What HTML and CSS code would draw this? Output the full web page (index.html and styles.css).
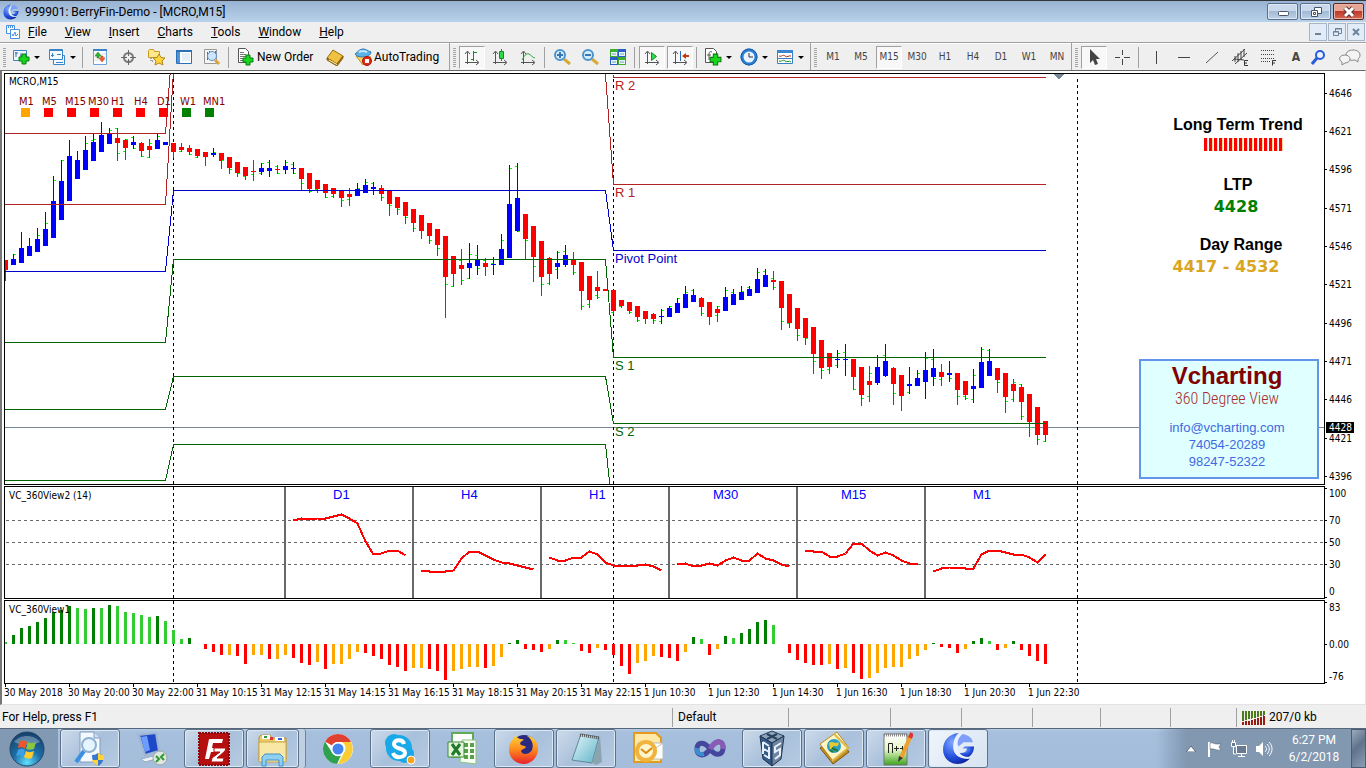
FILE: index.html
```html
<!DOCTYPE html>
<html lang="en">
<head>
<meta charset="utf-8">
<title>999901: BerryFin-Demo - [MCRO,M15]</title>
<link rel="stylesheet" href="styles.css">
</head>
<body>
<svg class="defs" aria-hidden="true">
  <defs>
    <radialGradient id="gBlue" cx=".35" cy=".3" r=".8"><stop offset="0" stop-color="#7fa8ff"/><stop offset=".6" stop-color="#2450dc"/><stop offset="1" stop-color="#0a1f9a"/></radialGradient>
    <radialGradient id="gOrb" cx=".5" cy=".9" r=".9"><stop offset="0" stop-color="#5fe0ff"/><stop offset=".45" stop-color="#1c6fa8"/><stop offset="1" stop-color="#173e66"/></radialGradient>
    <linearGradient id="gFox" x1="0" y1="0" x2="0" y2="1"><stop offset="0" stop-color="#ffd43a"/><stop offset=".5" stop-color="#ff8a1c"/><stop offset="1" stop-color="#e8202c"/></linearGradient>
    <linearGradient id="gPad" x1="0" y1="0" x2="1" y2="1"><stop offset="0" stop-color="#e6f8fc"/><stop offset="1" stop-color="#5fb2c8"/></linearGradient>
    <linearGradient id="gLime" x1="0" y1="0" x2="0" y2="1"><stop offset="0" stop-color="#fff"/><stop offset=".5" stop-color="#e5f6c8"/><stop offset="1" stop-color="#3fa51d"/></linearGradient>
    <symbol id="swirl" viewBox="0 0 32 32"><path d="M16 1C7 2 1 8 1 17c0 8 6 14 14 14 5 0 9-2 12-5-9 1-16-4-16-12 0-6 2-10 5-13z" fill="url(#gBlue)"/><path d="M19 2c-6 3-8 8-8 13 0 8 8 12 15 9-8-1-12-6-11-12 0-4 2-8 4-10z" fill="#e8f0ff"/><path d="M20 2c-4 3-6 8-4 12l5-4h9C29 6 26 3 20 2z" fill="#7f9ffa"/><path d="M22 14h9c0 5-2 8-5 10-4 0-7-1-9-4 4 1 7-1 7-4h-4z" fill="url(#gBlue)"/></symbol>
    <symbol id="plus" viewBox="0 0 12 12"><path d="M4 1h4v3h3v4H8v3H4V8H1V4h3z" fill="#17d61b" stroke="#0a7d12"/></symbol>
    <symbol id="axes" viewBox="0 0 18 18"><path d="M4.500 16V4M2 6l2.500-3L7 6M2 14.500h13M13 12l3 2.500-3 2.500" fill="none" stroke="#555"/></symbol>
  </defs>
</svg>

<header class="titlebar">
  <svg class="app-icon" width="16" height="16"><use href="#swirl"/></svg>
  <h1 class="title">999901: BerryFin-Demo - [MCRO,M15]</h1>
  <div class="caption">
    <button class="cap" aria-label="Minimize"><svg width="14" height="12"><rect x="2.500" y="5.500" width="10" height="4" rx="1" fill="#fff" stroke="#475566"/></svg></button>
    <button class="cap" aria-label="Restore"><svg width="14" height="12" fill="#fff" stroke="#475566"><path d="M5.500 1.500h7v6h-7z"/><path d="M2.500 4.500h6v6h-6z"/><path d="M4.500 6.500h2v2h-2z"/></svg></button>
    <button class="cap cap-close" aria-label="Close"><svg width="14" height="12"><path d="M3 2l8 8M11 2l-8 8" stroke="#5a3a3a" stroke-width="5"/><path d="M3 2l8 8M11 2l-8 8" stroke="#fff" stroke-width="3"/></svg></button>
  </div>
</header>

<nav class="menubar" aria-label="Main menu">
  <svg class="doc-icon" width="16" height="16" fill="#fff" stroke="#4a90e0"><path d="M1.500 1.500h8v8h-8z"/><path d="M1 3h9" stroke-width="2" stroke-dasharray="1 1"/><path d="M5.500 5.500h9v9h-9z"/><path d="M7 10l1 2 2-4 1 4 2-2" fill="none"/></svg>
  <button class="menu"><u>F</u>ile</button>
  <button class="menu"><u>V</u>iew</button>
  <button class="menu"><u>I</u>nsert</button>
  <button class="menu"><u>C</u>harts</button>
  <button class="menu"><u>T</u>ools</button>
  <button class="menu"><u>W</u>indow</button>
  <button class="menu"><u>H</u>elp</button>
  <div class="doc-caption">
    <button class="doc-btn" aria-label="Minimize chart"><svg width="10" height="10"><path d="M2 7h6" stroke="#6f8296" stroke-width="2"/></svg></button>
    <button class="doc-btn" aria-label="Restore chart"><svg width="10" height="10" fill="none" stroke="#6f8296"><path d="M3.500 4V1.500h6v5H7"/><path d="M3 2h7M1 5h6"/><path d="M1.500 4.500h5v4h-5z"/></svg></button>
    <button class="doc-btn" aria-label="Close chart"><svg width="10" height="10"><path d="M2 2l6 6M8 2L2 8" stroke="#6f8296" stroke-width="2"/></svg></button>
  </div>
</nav>

<div class="toolbars">
  <div class="group" role="toolbar" aria-label="Standard">
    <i class="grip"></i>
    <button class="tb drop" aria-label="New chart"><svg width="18" height="18"><path d="M1.500 2.500h13v10h-13z" fill="#eef7ff" stroke="#3a85c8"/><path d="M3 5h3M4 4v5M8 8h5M9 5v3" stroke="#3a6a9a"/><use href="#plus" x="6" y="5" width="12" height="12"/></svg></button>
    <button class="tb drop" aria-label="Profiles"><svg width="18" height="18" fill="#f4faff" stroke="#3a85c8"><path d="M5.500 7.500h11v9h-11z"/><path d="M1.500 1.500h13v10h-13z"/><path d="M1 2.500h14"/><path d="M4.500 5v4M3 7.500h3M9 6.500h4M8 14.500h7"/></svg></button>
    <i class="sep"></i>
    <button class="tb" aria-label="Market Watch"><svg width="18" height="18"><path d="M2.500 1.500h13v15h-13z" fill="#fff" stroke="#6aa5dc"/><path d="M2 2h14" stroke="#3a85c8" stroke-width="2"/><path d="M3 6h12M3 9h12M3 12h12" stroke="#ddd"/><path d="M7 4l3 4H8v2H6V8H4z" fill="#2db52d" stroke="#17771a" stroke-width=".5"/><path d="M11 14l3-4h-2V8h-2v2H8z" fill="#f2602c" stroke="#a83c17" stroke-width=".5"/></svg></button>
    <button class="tb" aria-label="Data Window"><svg width="18" height="18"><circle cx="9.500" cy="9.500" r="4.500" fill="none" stroke="#777" stroke-width="2"/><path d="M9.500 2v6M9.500 11v6M2 9.500h6M11 9.500h6" stroke="#666"/></svg></button>
    <button class="tb" aria-label="Navigator"><svg width="18" height="18"><path d="M1.500 2.500l1-1h4l1 2h5v6h-11z" fill="#ffe88a" stroke="#c79b22"/><path d="M4 10v3h3" fill="none" stroke="#555" stroke-dasharray="1 1"/><path d="M12 6l2 3.500 4 .5-3 3 1 4-4-2-4 2 1-4-3-3 4-.5z" fill="#ffd63c" stroke="#b3851a"/></svg></button>
    <button class="tb" aria-label="Terminal"><svg width="18" height="18"><path d="M1.500 2.500h15v13h-15z" fill="#fff" stroke="#2a6fb8"/><path d="M1 3h16" stroke="#2a6fb8" stroke-width="2"/><path d="M2 4h3v11H2z" fill="#4d93d8"/><path d="M7 6h8M7 8h8M7 10h8M7 12h8" stroke="#c9def2"/></svg></button>
    <button class="tb" aria-label="Strategy Tester"><svg width="18" height="18"><path d="M1.500 1.500h12v14h-12z" fill="#f5f5f5" stroke="#999"/><path d="M4.500 4v8M6.500 3v3M12.500 3v4" stroke="#666"/><circle cx="9" cy="8" r="4.500" fill="#cfe6fa" stroke="#5a92c8"/><path d="M12 12l4 4" stroke="#d9a53a" stroke-width="3"/></svg></button>
    <i class="sep"></i>
    <button class="tb text order"><svg width="18" height="18"><path d="M1.500.5h7l3 3v11h-10z" fill="#fff" stroke="#555"/><path d="M3 4.500h4M3 6.500h6M3 8.500h6M3 10.500h4M3 12.500h3" stroke="#777"/><use href="#plus" x="5" y="6" width="12" height="12"/></svg>New Order</button>
    <button class="tb" aria-label="MetaEditor"><svg width="18" height="18"><path d="M1 10l6-8 10 6-6 8z" fill="#f0c040" stroke="#9a6f12"/><path d="M1 10v2l10 6 6-8V8l-6 8z" fill="#b07c16" stroke="#8a5f0c"/><path d="M3 12l8 4.500" stroke="#fff6cc"/></svg></button>
    <button class="tb text auto"><svg width="18" height="18"><path d="M2 8l7 9 8-8z" fill="#f8d25a" stroke="#c0912a"/><path d="M1 6c3-2 4-5 8-5s4 2 8 3c0 3-4 5-8 5S2 8 1 6z" fill="#5db2e6" stroke="#2d7db5"/><path d="M5 4c2-1 6-1 8 0" stroke="#c9ecff" fill="none" stroke-width="2"/><circle cx="13" cy="13" r="4.500" fill="#e02a18" stroke="#a81208"/><path d="M11 11h4v4h-4z" fill="#fff"/></svg>AutoTrading</button>
  </div>
  <div class="group charts" role="toolbar" aria-label="Charts">
    <i class="grip"></i>
    <button class="tb on" aria-label="Bar chart"><svg width="18" height="18"><use href="#axes" width="18" height="18"/><path d="M10.500 3v10M11 4.500h3M8 11.500h3" stroke="#138a22" fill="none"/></svg></button>
    <button class="tb" aria-label="Candlesticks"><svg width="18" height="18"><use href="#axes" width="18" height="18"/><path d="M10.500 1v12" stroke="#138a22"/><path d="M8.500 3.500h4v7h-4z" fill="#31d94a" stroke="#138a22"/></svg></button>
    <button class="tb" aria-label="Line chart"><svg width="18" height="18"><use href="#axes" width="18" height="18"/><path d="M3 12c2-4 4-7 7-6 2 1 4 4 6 4" stroke="#2ea53a" fill="none"/></svg></button>
    <i class="sep"></i>
    <button class="tb" aria-label="Zoom in"><svg width="18" height="18"><path d="M11 11l6 5" stroke="#d9a93a" stroke-width="3"/><circle cx="7" cy="7" r="5" fill="#d8eefc" stroke="#4a94d0" stroke-width="2"/><path d="M4 7h6M7 4v6" stroke="#3b76b4" stroke-width="2"/></svg></button>
    <button class="tb" aria-label="Zoom out"><svg width="18" height="18"><path d="M11 11l6 5" stroke="#d9a93a" stroke-width="3"/><circle cx="7" cy="7" r="5" fill="#d8eefc" stroke="#4a94d0" stroke-width="2"/><path d="M4 7h6" stroke="#3b76b4" stroke-width="2"/></svg></button>
    <button class="tb" aria-label="Tile windows"><svg width="18" height="18"><path d="M1 1h8v8H1zM9 9h8v8H9z" fill="#3fae2a"/><path d="M9 1h8v8H9zM1 9h8v8H1z" fill="#2c5fc8"/><path d="M2 4h6v4H2zM10 4h6v4h-6zM2 12h6v4H2zM10 12h6v4h-6z" fill="#e9f4ff"/><path d="M3 6h4M11 6h4M3 14h4M11 14h4" stroke="#6a9"/></svg></button>
    <i class="sep"></i>
    <button class="tb on" aria-label="Auto scroll"><svg width="18" height="18"><use href="#axes" width="18" height="18"/><path d="M8.500 4.500l5 4-5 4z" fill="#31d94a" stroke="#138a22"/></svg></button>
    <button class="tb on" aria-label="Chart shift"><svg width="18" height="18"><use href="#axes" width="18" height="18"/><path d="M9.500 3v10" stroke="#2d6bb0"/><path d="M11 8l4-3v2h3v2h-3v2z" fill="#c33a12"/></svg></button>
    <i class="sep"></i>
    <button class="tb drop" aria-label="Indicators"><svg width="18" height="18"><path d="M1.500.5h8l3 3v11h-11z" fill="#fff" stroke="#555"/><path d="M8 4c-2-1-3 0-3 2v6M3 7h4" stroke="#555" fill="none"/><use href="#plus" x="5" y="5" width="13" height="13"/></svg></button>
    <button class="tb drop" aria-label="Periods"><svg width="18" height="18"><circle cx="9" cy="9" r="7" fill="#e8f4ff" stroke="#2a7fd0" stroke-width="3"/><circle cx="9" cy="9" r="8" fill="none" stroke="#1a5fa8"/><path d="M9 5v4h4" stroke="#333" fill="none"/></svg></button>
    <button class="tb drop" aria-label="Templates"><svg width="18" height="18"><path d="M1.500 2.500h15v13h-15z" fill="#fff" stroke="#3a7fc0"/><path d="M1 3.500h16" stroke="#3a85d0" stroke-width="3"/><path d="M3 8c3 1 4-2 6 0s4-1 6 0" stroke="#a8321a" fill="none"/><path d="M2 10.500h14" stroke="#3a7fc0"/><path d="M3 13c3 1 4-2 6 0s4-1 6 1" stroke="#1f8a2a" fill="none"/></svg></button>
  </div>
  <div class="group" role="toolbar" aria-label="Timeframes">
    <i class="grip"></i>
    <button class="tb tf">M1</button><button class="tb tf">M5</button><button class="tb tf on">M15</button><button class="tb tf">M30</button><button class="tb tf">H1</button><button class="tb tf">H4</button><button class="tb tf">D1</button><button class="tb tf">W1</button><button class="tb tf">MN</button>
  </div>
  <div class="group last" role="toolbar" aria-label="Line studies">
    <i class="grip"></i>
    <button class="tb on" aria-label="Cursor"><svg width="18" height="18"><path d="M5 1v14l3-3 2 5 3-1-2-5h4z" fill="#444"/></svg></button>
    <button class="tb" aria-label="Crosshair"><svg width="18" height="18"><path d="M9.500 2v5M9.500 11v6M2 9.500h5M11 9.500h6" stroke="#444"/></svg></button>
    <i class="sep"></i>
    <button class="tb" aria-label="Vertical line"><svg width="18" height="18"><path d="M9.500 3v13" stroke="#444"/></svg></button>
    <button class="tb" aria-label="Horizontal line"><svg width="18" height="18"><path d="M3 9.500h12" stroke="#444"/></svg></button>
    <button class="tb" aria-label="Trendline"><svg width="18" height="18"><path d="M3 15L15 4" stroke="#555"/></svg></button>
    <button class="tb" aria-label="Equidistant channel"><svg width="18" height="18"><path d="M1 13L14 1M4 16L16 5M4 8v6M7 5v9M10 3v9M13 1v8M3 11l10 1" stroke="#444" fill="none"/><path d="M17 12.500h-3.500v5H17M13 15h3" stroke="#333" fill="none"/></svg></button>
    <button class="tb" aria-label="Fibonacci"><svg width="18" height="18"><path d="M2 2.500h13M2 6.500h13M2 10.500h13M2 13.500h9" stroke="#444" stroke-dasharray="1 1"/><path d="M17 12.500h-3.500v5M13 15h3" stroke="#333" fill="none"/></svg></button>
    <button class="tb letter" aria-label="Text">A</button>
    <button class="tb narrow" aria-label="Search"><svg width="16" height="16"><path d="M6 9l-5 6" stroke="#2a5bd8" stroke-width="3"/><circle cx="9" cy="6" r="4" fill="#eaf3ff" stroke="#2a5bd8" stroke-width="2"/></svg></button>
    <button class="tb chat" aria-label="Chat"><svg width="22" height="18" fill="#f4f4f4" stroke="#888"><path d="M14 2c4 0 7 2 7 5 0 2-1 3-2 4v3l-3-2c-6 1-9-1-9-5 0-3 3-5 7-5z"/><path d="M6 7c3 0 5 2 5 4s-2 4-5 4l-3 2v-3c-4-2-3-7 3-7z"/></svg></button>
  </div>
</div>

<main class="workspace">
  <section class="row row-main" aria-label="Price chart">
    <div class="pane">
      <svg id="price" class="plot"></svg>
      <ul class="tf-signals">
        <li class="warn">M1</li><li class="down">M5</li><li class="down">M15</li><li class="down">M30</li><li class="down">H1</li><li class="down">H4</li><li class="down">D1</li><li class="up">W1</li><li class="up">MN1</li>
      </ul>
      <dl class="stats">
        <dt>Long Term Trend</dt><dd class="trend"><i class="trend-bars"></i></dd>
        <dt>LTP</dt><dd class="ltp">4428</dd>
        <dt class="range-title">Day Range</dt><dd class="range">4417 - 4532</dd>
      </dl>
      <aside class="card">
        <h2>Vcharting</h2>
        <p class="tag">360 Degree View</p>
        <p><a href="mailto:info@vcharting.com">info@vcharting.com</a></p>
        <p>74054-20289</p>
        <p>98247-52322</p>
      </aside>
    </div>
    <svg id="priceAxis" class="axis"></svg>
  </section>
  <section class="row row-rsi" aria-label="VC_360View2">
    <div class="pane"><svg id="rsi" class="plot"></svg></div>
    <svg id="rsiAxis" class="axis"></svg>
  </section>
  <section class="row row-hist" aria-label="VC_360View1">
    <div class="pane"><svg id="hist" class="plot"></svg></div>
    <svg id="histAxis" class="axis"></svg>
  </section>
  <svg id="timeAxis" class="time-axis"></svg>
</main>

<footer class="statusbar">
  <span class="cell help">For Help, press F1</span>
  <span class="cell profile">Default</span>
  <span class="cell w102"></span><span class="cell w71"></span><span class="cell w71"></span><span class="cell w68"></span><span class="cell w70"></span><span class="cell w66"></span>
  <span class="cell traffic"><svg width="24" height="14" class="crisp"><path d="M0 4h24" stroke="#4c7a1a" stroke-width="8" stroke-dasharray="2 1"/><path d="M0 10.500h24" stroke="#4c7a1a" stroke-width="5" stroke-dasharray="2 1"/><path d="M0 14v-4L24 4v10z" fill="#efefef"/><path d="M1 14v-3M4 14v-4M7 14v-4M10 14V9M13 14V8M16 14V7M19 14V6M22 14V5" stroke="#9a1c10" stroke-width="2"/></svg>207/0 kb</span>
</footer>

<nav class="taskbar" aria-label="Taskbar">
  <button class="task start" aria-label="Start"><svg width="36" height="36"><circle cx="18" cy="18" r="17" fill="url(#gOrb)" stroke="#20476b"/><path d="M5 11c6-8 20-8 26 0-8 4-18 4-26 0z" fill="#fff" opacity=".3"/><path d="M10 11c3-2 5-2 8 0l-2 7c-2-2-5-2-7-1z" fill="#f0562a"/><path d="M19 11c3 2 5 1 8 0l-2 7c-3 1-5 1-8 0z" fill="#8cc63e"/><path d="M9 19c3-2 5-1 7 0l-2 7c-2-2-4-2-7-1z" fill="#3d9fe8"/><path d="M17 20c3 2 5 1 8 0l-2 7c-3 1-5 1-8-1z" fill="#fccb2e"/></svg></button>
  <button class="task open" aria-label="Event viewer"><svg width="32" height="36"><path d="M6 1h14l6 6v24H6z" fill="#f3f9ff" stroke="#7f9cc0"/><path d="M20 1v6h6" fill="#cfe0f5" stroke="#7f9cc0"/><path d="M10 20L2 31" stroke="#3b8ee0" stroke-width="4"/><circle cx="15" cy="14" r="7" fill="#e5f4ff" stroke="#8fb0d0" stroke-width="2"/><path d="M18 24c3 0 4-1 6-2 2 1 3 2 6 2 0 6-2 9-6 11-4-2-6-5-6-11z" fill="#3a78d0"/><path d="M24 22c2 1 3 2 6 2v5h-6zM18 29h6v6c-3-2-5-3-6-6z" fill="#ffd23a"/></svg></button>
  <button class="task" aria-label="Remote Desktop"><svg width="32" height="36"><path d="M3 4l17-2 3 18-14 4z" fill="#1f48c8" stroke="#9db4d4" stroke-width="2"/><path d="M5 6l6-1 3 14-5 2z" fill="#6d9cff"/><path d="M5 28l16-4 3 3-15 4z" fill="#eef2f6" stroke="#9aa8bc"/><circle cx="24" cy="27" r="7" fill="#dfe6e0" stroke="#9aa5a5"/><path d="M20 25l3 3-3 3M28 23l-3 3 3 3" stroke="#2d9a32" fill="none" stroke-width="2"/></svg></button>
  <button class="task open" aria-label="FileZilla"><svg width="34" height="36"><path d="M2 2h30v32H2z" fill="#b50f0f" stroke="#8c0808" stroke-width="2" stroke-dasharray="2 1"/><path d="M8 28l4-20h14l-1 4h-9l-1 5h6l-1 4h-6l-2 7z" fill="#fff"/><path d="M17 17h12l-1 3-8 7h7l-1 4H14l1-4 8-6h-6z" fill="#fff" stroke="#b50f0f"/></svg></button>
  <span class="stack"><button class="task open" aria-label="Explorer"><svg width="34" height="36"><path d="M3 6l2-2h9l2 3h14v22H3z" fill="#ecc965" stroke="#b99437"/><path d="M6 4h8v4H6zM19 6h9v4h-9z" fill="#fff"/><path d="M8 5h3v2H8z" fill="#2b9b3c"/><path d="M14 6h3v3h-3z" fill="#d33"/><path d="M22 7h4v2h-4z" fill="#36c"/><path d="M3 11h27v20H3z" fill="#f9e8a5" stroke="#c9a84a"/><path d="M6 35v-9l3-3h15l3 3v9h-4v-6H10v6z" fill="#8fd0f2" stroke="#3d93c8"/></svg></button></span>
  <button class="task" aria-label="Chrome"><svg width="32" height="36"><g transform="translate(16 18)"><circle r="15" fill="#fff"/><path d="M0-15A15 15 0 0 1 13-7H0A7 7 0 0 0-6-3.500L-13-7.500A15 15 0 0 1 0-15z" fill="#e0402f"/><path d="M13-7A15 15 0 0 1 0 15l6-11.500A7 7 0 0 0 4-7z" fill="#fbcd35"/><path d="M-13-7.500L-6 3.500A7 7 0 0 0 3 6.500L-1 15A15 15 0 0 1-13-7.500z" fill="#2fa14f"/><circle r="7" fill="#fff"/><circle r="5.500" fill="#4284f0"/></g></svg></button>
  <button class="task open" aria-label="Skype"><svg width="34" height="36"><circle cx="11" cy="12" r="9" fill="#19a8e8"/><circle cx="22" cy="23" r="9" fill="#19a8e8"/><circle cx="16" cy="17" r="13" fill="#19a8e8"/><path d="M21 13c-1-5-10-5-10 0 0 6 11 3 11 9 0 5-10 6-12 0" fill="none" stroke="#fff" stroke-width="4"/><circle cx="28" cy="29" r="4" fill="#f9a31c" stroke="#fff"/></svg></button>
  <button class="task" aria-label="Excel"><svg width="34" height="36"><path d="M7 2h21v24H7z" fill="#fff" stroke="#5faa55" stroke-width="2"/><path d="M17 9h14v24l-16-2z" fill="#f5fff0" stroke="#8fbf80"/><path d="M19 12h4v4h-4zM25 12h4v4h-4zM19 18h4v4h-4zM25 18h4v4h-4zM19 24h4v4h-4zM25 24h4v4h-4z" fill="#5aa04c"/><path d="M3 11h16v15H3z" fill="#e4f5dc" stroke="#3f8a3a"/><path d="M7 13l8 11M15 13L7 24" stroke="#217a2a" stroke-width="3"/></svg></button>
  <button class="task open" aria-label="Firefox"><svg width="34" height="36"><circle cx="17" cy="17" r="13" fill="#292a80"/><path d="M6 8l3-4c0 2 2 3 4 4 2 0 3 0 4 1-3 1-5 3-3 5 2 1 5 1 5 2-1 2-4 2-5 4 1 4 8 4 11-1 2-5 0-11-5-14 6 0 10 5 11 11 1 9-6 17-14 17S2 27 2 19c0-4 1-8 4-11z" fill="url(#gFox)"/></svg></button>
  <button class="task open" aria-label="Notepad"><svg width="34" height="36"><path d="M12 3l18 3-7 26-20-3z" fill="url(#gPad)" stroke="#5d8a99"/><path d="M23 32l8-26 2 25-6 3z" fill="#8aa4b0"/><path d="M11 4l19 3" stroke="#555" stroke-width="3" stroke-dasharray="1 1"/></svg></button>
  <button class="task" aria-label="Outlook"><svg width="34" height="36"><path d="M3 2h22l5 5v24H3z" fill="#ffe9a8" stroke="#e49a1c" stroke-width="2"/><path d="M7 12h25v16H7z" fill="#fff" stroke="#bbb"/><path d="M7 12l12 9 13-9" fill="none" stroke="#bbb"/><circle cx="15" cy="20" r="9" fill="#fff4cc" stroke="#f0b43c" stroke-width="4"/><path d="M10 18l5 4 6-5" stroke="#d98a10" stroke-width="2" fill="none"/></svg></button>
  <button class="task" aria-label="Visual Studio"><svg width="32" height="36"><path d="M16 18c-5-7-12-8-13-1-1 8 7 10 13 1 7-11 14-8 13 0-1 7-8 7-13 0z" fill="none" stroke="#45479d" stroke-width="5"/><path d="M16 18c7-11 14-8 13 0" fill="none" stroke="#8a5bb5" stroke-width="5"/><path d="M3 17c-1 5 3 7 7 6" fill="none" stroke="#3a8fd0" stroke-width="4"/></svg></button>
  <button class="task open" aria-label="VirtualBox"><svg width="34" height="38"><path d="M17 1l12 5-12 7L5 6z" fill="#8fa3b8" stroke="#28415e"/><path d="M5 6l12 7v23L8 29z" fill="#355a86" stroke="#1c3452"/><path d="M29 6l-12 7v23l9-7z" fill="#6d83a0" stroke="#1c3452"/><path d="M12 4l10 5M22 4L12 9" stroke="#28415e" stroke-width="2"/><path d="M8 12l6 4M9 19l5 3M9 25l5 3M8 12v12M14 17v12M26 13l-6 4v5l5-3v6l-5 4" stroke="#e5f0fb" fill="none" stroke-width="2"/></svg></button>
  <button class="task open" aria-label="Map library"><svg width="34" height="36"><path d="M3 17L20 4l12 17-16 12z" fill="#c18e24" stroke="#7d570e"/><path d="M3 13L20 1l12 16-16 13z" fill="#fff6c4" stroke="#b58a2d"/><path d="M17 3l14 14-16 13" fill="none" stroke="#e0b94a" stroke-width="2"/><circle cx="17" cy="15" r="7" fill="#2b9fc4"/><path d="M12 12c4-3 6 2 9-1 2 3-1 5-3 4s-3 4-5 3z" fill="#e8ca2e"/><path d="M15 17l6 3M13 19l3 2" stroke="#267a30" stroke-width="2"/></svg></button>
  <button class="task open" aria-label="Notepad++"><svg width="34" height="36"><path d="M5 3h23v31H5z" fill="url(#gLime)" stroke="#777"/><path d="M5 4h23" stroke="#888" stroke-width="3" stroke-dasharray="1 1"/><path d="M9.500 22V12.500h4V22M15 17.500h5M17.500 15v5M21 17.500h4M23.500 15v5" fill="none" stroke="#222"/><path d="M32 4L22 27" stroke="#f0a02c" stroke-width="4"/><path d="M20 25l-1 6 5-4z" fill="#333"/><path d="M33 2l-2 5" stroke="#d33" stroke-width="4"/></svg></button>
  <button class="task open active" aria-label="BerryFin"><svg width="33" height="36"><use href="#swirl" width="33" height="35"/></svg></button>
  <div class="tray">
    <svg width="10" height="6" class="up-arrow"><path d="M5 0l5 6H0z" fill="#fff" stroke="#5b6b80"/></svg>
    <svg width="17" height="18"><path d="M3 2v15" stroke="#fff" stroke-width="2"/><path d="M4 3c3-1 4 1 6 1h5l-2 3 2 3c-5 1-7-2-11-1z" fill="#fff" stroke="#4b596c" stroke-width=".5"/></svg>
    <svg width="18" height="18" fill="#687990" stroke="#fff"><path d="M6.500 5.500h10v8h-10z"/><path d="M8 16.500h7M11.500 14v2"/><path d="M1.500 2.500h4v4h-4zM3.500 7v7h3M2.500 0v2M4.500 0v2"/></svg>
    <svg width="18" height="18"><path d="M1 6h3l4-4v14l-4-4H1z" fill="#fff"/><path d="M10 6c2 2 2 4 0 6M12 4c3 3 3 7 0 10M14 2c4 4 4 10 0 14" stroke="#fff" fill="none"/></svg>
    <div class="clock"><time>6:27 PM</time><time>6/2/2018</time></div>
    <button class="show-desktop" aria-label="Show desktop"></button>
  </div>
</nav>
<script src="charts.js"></script>
</body>
</html>
```
FILE: styles.css
```css
* { box-sizing: border-box; }
body {
  margin: 0; min-height: 100vh; display: flex; flex-direction: column;
  background: #efefef; color: #000; font: 12px/16px Roboto, "Open Sans", sans-serif; overflow-x: hidden;
}
button { border: 0; margin: 0; padding: 0; background: none; font: inherit; color: inherit; }
h1, h2, p, ul, dl, dd { margin: 0; padding: 0; font-weight: normal; }
svg { display: block; flex: none; }
.defs { position: absolute; width: 0; height: 0; }
.crisp { shape-rendering: crispEdges; }

.titlebar { display: flex; align-items: center; height: 22px; padding-left: 3px; border-top: 1px solid #33363b; background: linear-gradient(#98b3d2, #b9d1ea); }
.title { flex: 1; padding-left: 6px; font-size: 12px; line-height: 18px; }
.caption { display: flex; gap: 2px; padding-right: 2px; }
.cap { display: flex; align-items: center; justify-content: center; width: 31px; height: 17px; border: 1px solid #5b6f8a; border-radius: 2px; background: linear-gradient(#c9d9eb 45%, #a2bad5 50%, #bed2e8); box-shadow: inset 0 0 0 1px #dce8f4; }
.cap-close { background: linear-gradient(#e6a594 45%, #c1392b 50%, #d4674f); border-color: #5a2420; box-shadow: inset 0 0 0 1px #eab5a8; }

.menubar { display: flex; align-items: center; height: 20px; padding-left: 5px; }
.doc-icon { margin-right: -2px; }
.menu { padding: 0 9px; line-height: 18px; }
.doc-caption { display: flex; gap: 1px; margin-left: auto; padding-right: 1px; }
.doc-btn { display: flex; align-items: center; justify-content: center; width: 18px; height: 18px; border: 1px solid #a5b6c8; background: #e1ecf8; }

.toolbars { display: flex; height: 28px; border-top: 1px solid #a0a0a0; box-shadow: inset 0 1px #fff; }
.group { display: flex; align-items: center; height: 28px; border-right: 1px solid #a0a0a0; }
.group.charts { padding-right: 2px; }
.group.last { flex: 1; border-right: 0; }
.grip { width: 3px; height: 19px; margin: 0 2px 0 3px; background: repeating-linear-gradient(#a5a5a5 0 1px, #efefef 1px 2px); }
.sep { width: 1px; height: 21px; margin: 0 3px 0 2px; background: #a0a0a0; }
.tb { display: flex; align-items: center; justify-content: center; width: 28px; height: 23px; }
.drop { width: 36px; justify-content: flex-start; padding-left: 4px; gap: 4px; }
.drop::after { content: ""; border: 3px solid transparent; border-top: 3px solid #000; border-bottom: 0; }
.text { justify-content: flex-start; padding-left: 5px; gap: 2px; }
.order { width: 89px; }
.auto { width: 100px; }
.on { width: 26px; margin: 0 1px; border: 1px solid #a0a0a0; border-right-color: #fff; border-bottom-color: #fff; background: #f8f8f8; }
.tf { color: #444; font: 10px/12px "DejaVu Sans Condensed", "DejaVu Sans", sans-serif; }
.letter { color: #444; font: bold 12px/16px "DejaVu Sans Condensed", "DejaVu Sans", sans-serif; }
.narrow { width: 18px; }
.chat { width: 22px; margin-left: auto; margin-right: 5px; }

.workspace { flex: 1; display: flex; flex-direction: column; padding: 2px 0 0 2px; border: 1px solid #696969; border-left: 2px solid #777; border-right-color: #e3e3e3; border-bottom-color: #e3e3e3; background: #fff; }
.row { display: grid; grid-template-columns: 1fr 40px; grid-template-rows: minmax(0, 1fr); margin-bottom: 1px; }
.row-main { flex: 1; min-height: 412px; }
.row-rsi { height: 113px; }
.row-hist { height: 84px; margin-bottom: 0; }
.pane { position: relative; border: 1px solid #000; min-width: 0; overflow: hidden; }
.plot, .axis, .time-axis { width: 100%; height: 100%; overflow: visible; shape-rendering: crispEdges; }
.plot { position: absolute; inset: 0; overflow: hidden; }
.time-axis { height: 20px; overflow: hidden; }
.small { font: 10px "DejaVu Sans Condensed", "DejaVu Sans", sans-serif; }
.label { font: 13px "Liberation Sans", Arial, sans-serif; }

.tf-signals { position: absolute; left: 14px; top: 21px; display: flex; list-style: none; color: #800000; font: 11px/13px "DejaVu Sans Condensed", "DejaVu Sans", sans-serif; }
.tf-signals li { width: 23px; white-space: nowrap; }
.tf-signals li::after { content: ""; display: block; width: 9px; height: 9px; margin-left: 2px; }
.tf-signals .warn::after { background: orange; }
.tf-signals .down::after { background: red; }
.tf-signals .up::after { background: green; }
.stats { position: absolute; top: 41px; right: 14px; width: 144px; text-align: center; font: bold 16px/20px "Liberation Sans", Arial, sans-serif; }
.stats dt { height: 22px; }
.stats dd { height: 38px; font-family: "DejaVu Sans", sans-serif; font-weight: bold; }
.stats .ltp { color: green; padding-right: 4px; }
.stats .range { color: goldenrod; padding-right: 24px; white-space: nowrap; }
.stats .range-title { padding-left: 6px; }
.stats .trend { padding: 1px 0 0 38px; }
.trend-bars { display: block; width: 79px; height: 13px; background: repeating-linear-gradient(90deg, red 0 3px, #ffd9a0 3px 4px, #fff 4px 5px); }
.card { position: absolute; right: 5px; bottom: 5px; width: 180px; height: 120px; border: 2px solid cornflowerblue; background: #e0ffff; text-align: center; color: royalblue; font: 13px/17px "Liberation Sans", Arial, sans-serif; padding: 1px 4px 0 0; }
.card h2 { color: maroon; font-weight: bold; font-size: 24px; line-height: 28px; }
.card .tag { color: brown; font: 300 16px/18px "Roboto Condensed", "Liberation Sans", sans-serif; margin-bottom: 11px; }
.card a { color: inherit; text-decoration: none; }

.statusbar { display: flex; height: 23px; padding-top: 3px; }
.cell { height: 19px; line-height: 19px; border-left: 1px solid #a0a0a0; padding-left: 5px; }
.help { flex: 1; border-left: 0; padding-left: 2px; }
.profile { width: 116px; }
.w102 { width: 102px; } .w71 { width: 71px; } .w68 { width: 68px; } .w70 { width: 70px; } .w66 { width: 66px; }
.traffic { display: flex; align-items: center; gap: 3px; width: 130px; }

.taskbar { display: flex; gap: 2px; height: 40px; border-top: 1px solid #56677b; background: linear-gradient(#b6cbe2, #a5bfdd 3px, #a3bddb); }
.task { display: flex; align-items: center; justify-content: center; width: 60px; height: 39px; }
.start { width: 58px; background: #8299b4; padding-right: 4px; }
.open { border: 1px solid #5d7189; border-radius: 3px; background: linear-gradient(135deg, #cddbea, #a9c0db 50%, #b6cbe2); box-shadow: inset 0 0 0 1px #dce8f4; }
.active { background: linear-gradient(135deg, #f0f5fb, #d6e3f1); }
.stack { width: 60px; border-right: 1px solid #6f849d; border-radius: 3px; padding-right: 3px; background: #bfd0e3; }
.stack .task { width: 53px; }
.tray { display: flex; align-items: center; gap: 7px; margin-left: auto; padding-left: 30px; background: linear-gradient(90deg, transparent, #8297b0 30px); color: #fff; }
.up-arrow { margin-right: 3px; }
.clock { display: flex; flex-direction: column; width: 60px; margin-left: 4px; text-align: center; line-height: 17px; }
.show-desktop { width: 15px; height: 39px; border: 1px solid #4d5d70; background: linear-gradient(135deg, #9aabbf, #60738a 45%, #8b9eb5); }
```
FILE: charts.js
```js
(function () {
  var NS = "http://www.w3.org/2000/svg";
  var X0 = 5, STEP = 8;

  function add(parent, tag, attrs, text) {
    var el = document.createElementNS(NS, tag);
    for (var k in attrs) el.setAttribute(k, attrs[k]);
    if (text !== undefined) el.textContent = text;
    parent.appendChild(el);
    return el;
  }
  function layer(id, dx, dy) {
    return add(document.getElementById(id), "g", { transform: "translate(" + dx + " " + dy + ")" });
  }
  function rect(g, x, y, w, h, fill) { add(g, "rect", { x: x, y: y, width: w, height: h, fill: fill }); }
  function line(g, points, stroke, width) {
    add(g, "polyline", { points: points, fill: "none", stroke: stroke, "stroke-width": width || 1, transform: "translate(.5 .5)" });
  }
  function text(g, x, y, s, cls, fill) { add(g, "text", { x: x, y: y, "class": cls, fill: fill || "#000" }, s); }
  function dashV(g, y1, y2) {
    [173, 613, 1077].forEach(function (x) {
      add(g, "path", { d: "M" + (x + 0.5) + " " + y1 + "V" + y2, stroke: "#000", "stroke-dasharray": "3 3" });
    });
  }

  /* direction, body top, body bottom, wick top, wick bottom, left tick, right tick (0 = none) */
  var candles = "r260,270,260,281,0,0 b259,265,254,265,0,254 b248,263,232,263,0,0 b246,256,238,256,0,0 b239,252,228,252,0,235 b229,246,212,246,0,223 b201,238,176,238,0,180 b181,220,160,220,0,160 b156,201,140,201,0,0 b160,179,151,179,0,0 b150,170,136,170,0,143 b142,161,134,161,140,139 b135,152,122,152,0,0 b134,144,128,144,0,130 r138,143,128,161,128,153 r140,148,139,160,151,139 b142,145,136,149,137,148 r143,151,142,157,0,156 r146,150,139,158,157,143 b140,149,134,149,0,136 b142,145,142,145,0,0 r143,152,143,158,0,0 r147,150,143,152,151,0 r148,152,145,155,0,154 r149,156,149,158,157,0 r152,157,152,166,0,0 b153,155,148,157,0,152 r153,161,153,169,0,160 r157,168,157,174,0,169 r162,173,162,177,0,173 r167,176,167,180,176,0 r171,172,160,181,174,0 b168,172,163,175,173,163 b168,171,160,177,162,0 r169,170,165,174,166,173 b166,170,160,174,0,162 b168,169,162,174,164,173 r168,179,168,190,0,183 r173,189,173,193,0,191 r180,189,180,193,189,0 r184,193,184,198,0,197 r188,194,188,198,196,0 r191,198,191,207,0,200 r194,197,188,206,199,0 b189,196,183,196,0,188 b185,193,179,193,0,182 b187,189,182,195,183,0 r188,194,185,201,0,197 r190,204,190,216,0,205 r197,208,197,215,0,209 r202,216,202,224,0,217 r209,223,209,232,0,228 r215,231,215,239,0,0 r223,236,223,244,0,240 r229,245,229,256,0,248 r236,277,236,318,0,284 r256,274,256,287,286,0 r265,269,249,285,260,280 b263,268,243,279,278,254 b260,266,245,275,255,268 r263,267,258,276,260,0 b264,265,257,275,263,0 b249,265,234,265,0,240 b204,258,165,258,0,168 b198,231,163,232,166,231 r214,239,214,260,0,240 r226,257,226,282,0,266 r241,277,241,296,0,284 r258,274,257,285,283,0 b263,267,251,279,269,252 b255,265,245,267,251,0 r260,265,252,275,0,272 r262,291,262,310,0,306 r276,300,276,308,304,0 r287,291,271,299,295,297 r289,291,289,291,0,0 r290,311,290,314,312,0 r300,306,300,308,306,0 r302,311,302,314,0,312 r306,317,306,322,0,320 r311,319,311,324,0,0 r314,319,313,324,0,320 b316,317,309,324,321,310 b308,317,306,317,0,306 b303,313,298,313,0,298 b294,308,286,308,0,292 b295,302,289,302,290,0 r298,307,297,316,0,313 r302,317,302,325,0,0 r309,313,306,322,315,306 b297,311,287,311,0,290 b294,305,289,305,292,0 b292,300,286,300,0,291 b289,296,286,296,287,0 b279,293,268,293,0,272 b275,287,269,287,271,0 r280,282,271,290,278,287 r281,308,281,330,0,321 r294,323,294,328,323,0 r308,329,308,341,0,335 r318,338,318,345,0,338 r327,354,327,374,0,361 r340,368,340,379,0,370 r353,367,353,374,369,0 b359,360,350,368,365,353 b359,360,344,376,352,0 r359,377,359,390,0,389 r367,395,367,406,0,398 r381,385,366,402,396,373 b367,383,355,385,0,357 b361,376,344,377,355,0 r368,384,367,405,0,393 r375,396,375,411,0,0 b384,386,367,394,392,0 b378,386,370,386,0,373 b370,382,352,399,0,358 b368,377,349,386,359,378 r372,377,364,386,379,0 b373,375,361,382,0,378 r373,390,373,405,0,396 r381,395,381,400,396,398 b386,389,369,403,399,375 b362,388,347,388,0,349 b361,376,349,376,350,0 r368,380,368,393,0,382 r373,397,373,413,0,401 r384,391,379,402,399,382 r387,402,384,420,384,416 r394,422,394,437,0,427 r407,435,407,445,0,439 r421,435,421,442,441,0";

  var g = layer("price", -5, -74);
  line(g, "4,427 3000,427", "#778899");
  dashV(g, 79, 900);
  candles.split(" ").forEach(function (c, i) {
    var color = c[0] === "b" ? "#00f" : "#f00";
    var v = c.slice(1).split(",").map(Number), x = X0 + i * STEP;
    rect(g, x, v[2], 1, v[3] - v[2], color);
    rect(g, x - 2, v[0], 5, v[1] - v[0], color);
    if (v[4]) rect(g, x - 2, v[4], 2, 1, "#0f0");
    if (v[5]) rect(g, x + 1, v[5], 2, 1, "#0f0");
  });
  line(g, "4,133 165,133 173,29", "#b22222");
  line(g, "4,204 165,204 173,70", "#b22222");
  line(g, "605,74 613,184 1045,184", "#b22222");
  line(g, "613,74 613,77 1045,77", "#b22222");
  line(g, "4,271 165,271 173,190 605,190 613,250 1045,250", "#0000cd");
  ["4,342 165,342 173,259 605,259 613,357 1045,357",
   "4,409 165,409 173,376 605,376 613,423 1045,423",
   "4,480 165,480 173,444 605,444 610,490"].forEach(function (p) { line(g, p, "#006400"); });
  text(g, 9, 85, "MCRO,M15", "small");
  text(g, 615, 90, "R 2", "label", "#b22222");
  text(g, 615, 197, "R 1", "label", "#b22222");
  text(g, 615, 263, "Pivot Point", "label", "#0000cd");
  text(g, 615, 370, "S 1", "label", "#006400");
  text(g, 615, 436, "S 2", "label", "#006400");
  add(g, "path", { d: "M1053 74h11l-5 5z", fill: "#778899" });

  function scale(id, originY, labels) {
    var a = layer(id, 0, -originY);
    labels.forEach(function (l) {
      rect(a, 0, l[2] || l[0], 2, 1, "#000");
      text(a, 4, l[0] + 4, l[1], "small");
    });
    return a;
  }
  var axis = scale("priceAxis", 73, [[93, 4646], [131, 4621], [169, 4596], [208, 4571], [246, 4546], [284, 4521], [323, 4496], [361, 4471], [399, 4446], [438, 4421], [476, 4396]]);
  rect(axis, 1, 422, 28, 11, "#000");
  text(axis, 4, 431, "4428", "small", "#fff");
  scale("rsiAxis", 486, [[493, "100", 488], [520, "70"], [542, "50"], [564, "30"], [591, "0", 597]]);
  scale("histAxis", 600, [[607, "83", 602], [644, "0.00"], [676, "-76", 682]]);

  g = layer("rsi", -5, -487);
  [520, 542, 564].forEach(function (y) {
    add(g, "path", { d: "M6 " + (y + 0.5) + "H3000", stroke: "#696969", "stroke-dasharray": "3 3" });
  });
  dashV(g, 487, 600);
  ["D1", "H4", "H1", "M30", "M15", "M1"].forEach(function (name, i) {
    rect(g, 284 + i * 128, 487, 2, 120, "#696969");
    text(g, 333 + i * 128 - (name.length > 2 ? 4 : 0), 499, name, "label", "#00f");
  });
  [[293, "520 518 519 518 518 516 514 518 523 541 554 553 550 550 555"],
   [421, "570 571 571 571 570 558 551 551 555 559 562 563 565 567 569"],
   [549, "557 560 560 557 557 551 554 562 565 565 565 565 564 566 570"],
   [677, "564 563 566 565 563 565 560 557 560 560 553 558 560 564 566"],
   [805, "550 551 551 556 556 553 543 543 550 555 552 555 560 563 563"],
   [933, "571 568 567 567 568 568 554 550 550 552 554 554 557 562 554"]].forEach(function (s) {
    line(g, s[1].split(" ").map(function (y, i) { return (s[0] + i * STEP) + "," + y; }).join(" "), "#f00", 2);
  });
  text(g, 9, 499, "VC_360View2 (14)", "small");

  /* g rising, l easing above zero; r falling, o recovering below zero */
  var bars = "l2 g9 g16 g18 g22 g26 g32 g34 g38 l36 l35 g36 l36 g39 l38 l32 l31 l29 l27 g28 l23 l14 l5 g6 g0 r5 r8 r11 o11 r12 r20 o11 o11 r15 o15 o11 r14 r19 r21 o18 r25 o20 o20 o15 o8 r9 r12 r15 r21 r23 r27 o24 o24 r25 r27 r36 o27 o25 o23 o23 r24 o22 o13 g1 g4 r5 r6 r8 o5 g4 l4 l1 r7 r9 o4 r6 r11 r22 r30 o19 o17 o12 r13 r14 r17 o8 g7 l5 r11 o5 g8 l6 g11 g15 g22 g24 l19 g0 r9 r16 r19 r21 r21 o20 r25 o24 r29 r35 o34 o29 o24 o23 o23 o15 o12 o6 g1 r3 r4 r9 o5 g3 g6 l3 r6 o4 g3 r6 r12 r17 r20";
  var colors = { g: "#008000", l: "#32cd32", r: "#f00", o: "#ffa500" };
  g = layer("hist", -5, -601);
  dashV(g, 601, 690);
  bars.split(" ").forEach(function (b, i) {
    var h = +b.slice(1), up = b[0] === "g" || b[0] === "l";
    rect(g, X0 + i * STEP - 1, up ? 644 - h : 644, 3, h, colors[b[0]]);
  });
  text(g, 9, 613, "VC_360View1", "small");

  g = layer("timeAxis", -4, -684);
  ["30 May 2018", "30 May 20:00", "30 May 22:00", "31 May 10:15", "31 May 12:15", "31 May 14:15", "31 May 16:15", "31 May 18:15", "31 May 20:15", "31 May 22:15", "1 Jun 10:30", "1 Jun 12:30", "1 Jun 14:30", "1 Jun 16:30", "1 Jun 18:30", "1 Jun 20:30", "1 Jun 22:30"].forEach(function (t, i) {
    rect(g, 5 + i * 64, 684, 1, 3, "#000");
    text(g, 4 + i * 64, 696, t, "small");
  });
})();
```
